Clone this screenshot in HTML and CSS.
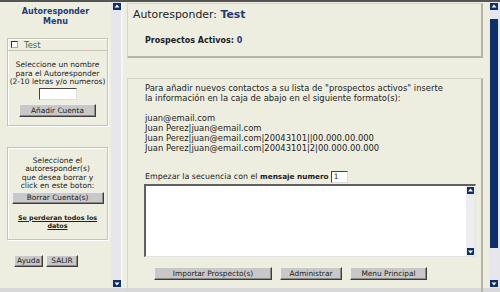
FILE: index.html
```html
<!DOCTYPE html>
<html lang="es">
  <head>
    <meta charset="UTF-8" />
    <title>Autoresponder</title>
    <link rel="stylesheet" href="styles.css">
  </head>
  <body>
    <div class="window">
      <div class="frame frame-left">
        <div class="left-content">
          <h1 class="menu-title">Autoresponder<br>Menu</h1>

          <div class="box">
            <div class="box-head">
              <span class="check"></span>
              <span class="account">Test</span>
            </div>
            <div class="box-body">
              <p class="note">Seleccione un nombre<br>para el Autoresponder<br>(2-10 letras y/o numeros)</p>
              <div class="name-input"></div>
              <button class="btn btn-add">Añadir Cuenta</button>
            </div>
          </div>

          <div class="box box-delete">
            <div class="box-body">
              <p class="note">Seleccione el<br>autoresponder(s)<br>que desea borrar y<br>click en este boton:</p>
              <button class="btn btn-delete">Borrar Cuenta(s)</button>
              <p class="warning">Se perderan todos los<br>datos</p>
            </div>
          </div>

          <div class="left-buttons">
            <button class="btn btn-help">Ayuda</button>
            <button class="btn btn-exit">SALIR</button>
          </div>
        </div>
        <div class="scrollbar">
          <svg class="arrow" width="8" height="7" viewBox="0 0 8 7"><rect width="8" height="7" fill="#0e2f6c"/><polygon points="4,1.5 1.5,4.5 6.5,4.5" fill="#fff"/></svg>
          <svg class="arrow" width="8" height="7" viewBox="0 0 8 7"><rect width="8" height="7" fill="#0e2f6c"/><polygon points="1.5,2.5 6.5,2.5 4,5.5" fill="#fff"/></svg>
        </div>
      </div>

      <div class="divider"></div>

      <div class="frame frame-right">
        <div class="right-content">
          <div class="panel panel-head">
            <h2 class="page-title">Autoresponder: <b class="blue">Test</b></h2>
            <p class="active">Prospectos Activos: <span class="blue">0</span></p>
          </div>

          <div class="panel panel-main">
            <p class="text">Para añadir nuevos contactos a su lista de "prospectos activos" inserte<br>la información en la caja de abajo en el siguiente formato(s):</p>
            <p class="text formats">juan@email.com<br>Juan Perez|juan@email.com<br>Juan Perez|juan@email.com|20043101||00.000.00.000<br>Juan Perez|juan@email.com|20043101|2|00.000.00.000</p>
            <div class="seq-row">
              <span class="seq-label">Empezar la secuencia con el <b>mensaje numero</b></span>
              <div class="seq-input">1</div>
            </div>
            <div class="textarea">
              <div class="textarea-body"></div>
              <div class="scrollbar small">
                <svg class="arrow" width="7" height="7" viewBox="0 0 7 7"><rect width="7" height="7" fill="#0e2f6c"/><polygon points="3.5,1.5 1,4.5 6,4.5" fill="#fff"/></svg>
                <svg class="arrow" width="7" height="7" viewBox="0 0 7 7"><rect width="7" height="7" fill="#0e2f6c"/><polygon points="1,2.5 6,2.5 3.5,5.5" fill="#fff"/></svg>
              </div>
            </div>
            <div class="actions">
              <button class="btn btn-import">Importar Prospecto(s)</button>
              <button class="btn btn-admin">Administrar</button>
              <button class="btn btn-menu">Menu Principal</button>
            </div>
          </div>
        </div>
        <div class="scrollbar right-bar">
          <svg class="arrow" width="8" height="7" viewBox="0 0 8 7"><rect width="8" height="7" fill="#0e2f6c"/><polygon points="4,1.5 1.5,4.5 6.5,4.5" fill="#fff"/></svg>
          <div class="thumb"></div>
          <svg class="arrow" width="8" height="7" viewBox="0 0 8 7"><rect width="8" height="7" fill="#0e2f6c"/><polygon points="1.5,2.5 6.5,2.5 4,5.5" fill="#fff"/></svg>
        </div>
      </div>
    </div>
  </body>
</html>
```

FILE: styles.css
```css
* {
  margin: 0;
  padding: 0;
  box-sizing: border-box;
}
body {
  width: 500px;
  height: 292px;
  overflow: hidden;
  background: #dcdcdc;
  font-family: "DejaVu Sans", Verdana, sans-serif;
  font-size: 7.3px;
  color: #222;
}
.window {
  display: flex;
  height: 292px;
  border-top: 2px solid #555;
  border-bottom: 4px solid #d8d8d8;
  background: #eeeee0;
}
.frame {
  display: flex;
  height: 286px;
}
.frame-left {
  width: 121px;
}
.left-content {
  width: 111px;
}
.divider {
  width: 2px;
  background: #f6f6f2;
}
.frame-right {
  width: 377px;
}
.right-content {
  width: 366px;
  padding-left: 4px;
}

/* scrollbars */
.scrollbar {
  width: 10px;
  height: 100%;
  background: #e6e6ec;
  display: flex;
  flex-direction: column;
  justify-content: space-between;
  align-items: center;
  padding: 1px 0;
}
.scrollbar .arrow {
  display: block;
}
.frame-left .scrollbar {
  padding: 1px 0 1px 1px;
}
.right-bar {
  width: 11px;
  padding: 1px 3px 1px 1px;
}
.right-bar .thumb {
  flex: 1;
  width: 8px;
  margin: 9px 0 32px;
  background: #0d2f6b;
}

/* left menu */
.menu-title {
  margin-top: 5px;
  text-align: center;
  font-size: 8px;
  line-height: 10px;
  font-weight: bold;
  color: #1e3c78;
}
.box {
  margin: 11px 0 0 7px;
  width: 101px;
  border: 1px solid #c4c4b4;
  box-shadow: 1px 1px 0 #fff, inset 1px 1px 0 #fff;
}
.box-head {
  display: flex;
  align-items: center;
  height: 12px;
  padding-left: 3px;
  border-bottom: 1px solid #c4c4b4;
}
.check {
  width: 7px;
  height: 7px;
  background: #fff;
  border: 1px solid #333;
  border-right-color: #aaa;
  border-bottom-color: #aaa;
}
.account {
  margin-left: 6px;
  font-size: 8.4px;
  color: #2f6a5c;
}
.box-body {
  display: flex;
  flex-direction: column;
  align-items: center;
  padding: 10px 0 8px;
}
.note {
  text-align: center;
  line-height: 8.5px;
  font-size: 7.5px;
  white-space: nowrap;
}
.name-input {
  margin-top: 1px;
  width: 38px;
  height: 12px;
  background: #fff;
  border: 1px solid #444;
  border-right-color: #ddd;
  border-bottom-color: #ddd;
}
.btn {
  height: 13px;
  font-family: "DejaVu Sans", Verdana, sans-serif;
  font-size: 7.4px;
  color: #222;
  background: #c8c8c8;
  border: 1px solid;
  border-color: #eee #3c3c3c #3c3c3c #eee;
  box-shadow: inset -1px -1px 0 #8a8a8a;
}
.btn-add {
  margin-top: 4px;
  width: 77px;
}
.box-delete {
  margin-top: 21px;
}
.box-delete .box-body {
  padding-top: 9px;
}
.btn-delete {
  margin-top: 1px;
  width: 92px;
  height: 12px;
}
.warning {
  margin-top: 10px;
  text-align: center;
  white-space: nowrap;
  font-weight: bold;
  font-size: 6.4px;
  line-height: 8.5px;
  text-decoration: underline;
}
.left-buttons {
  display: flex;
  gap: 3px;
  margin: 15px 0 0 14px;
}
.btn-help {
  width: 29px;
  height: 12px;
}
.btn-exit {
  width: 32px;
  height: 12px;
}

/* right content */
.panel {
  width: 356px;
  border: 1px solid #d6d6cc;
  border-right: 2px solid #b4b4a6;
  border-bottom: 2px solid #b4b4a6;
}
.panel-head {
  margin-top: 1px;
  height: 55px;
  padding: 4px 0 0 5px;
}
.page-title {
  font-size: 10.9px;
  line-height: 13px;
  font-weight: normal;
  color: #222;
}
.blue {
  color: #1e3c78;
}
.active {
  margin: 15px 0 0 12px;
  font-weight: bold;
  font-size: 8px;
  line-height: 10px;
}
.panel-main {
  margin-top: 20px;
  height: 220px;
  padding: 4px 0 0 17px;
  border-bottom: none;
}
.text {
  font-size: 8.4px;
  line-height: 10px;
  white-space: nowrap;
}
.formats {
  margin-top: 10px;
}
.seq-row {
  display: flex;
  align-items: center;
  height: 12px;
  margin-top: 18px;
}
.seq-label {
  font-size: 7.9px;
  line-height: 10px;
}
.seq-label b {
  font-size: 7.3px;
}
.seq-input {
  margin-left: 2px;
  width: 17px;
  height: 12px;
  padding-left: 2px;
  font-size: 7.4px;
  line-height: 10px;
  background: #fff;
  border: 1px solid #444;
  border-right-color: #ddd;
  border-bottom-color: #ddd;
}
.textarea {
  display: flex;
  margin: 1px 0 0 -1px;
  width: 332px;
  height: 73px;
  background: #fff;
  border-top: 2px solid #606060;
  border-left: 2px solid #606060;
  border-right: 1px solid #e4e4e4;
  border-bottom: 1px solid #e4e4e4;
}
.textarea-body {
  flex: 1;
}
.scrollbar.small {
  width: 9px;
  padding: 1px 0;
  background: #ededf0;
}
.actions {
  display: flex;
  gap: 8px;
  margin: 10px 0 0 9px;
}
.btn-import {
  width: 118px;
}
.btn-admin {
  width: 62px;
}
.btn-menu {
  width: 77px;
}
```
